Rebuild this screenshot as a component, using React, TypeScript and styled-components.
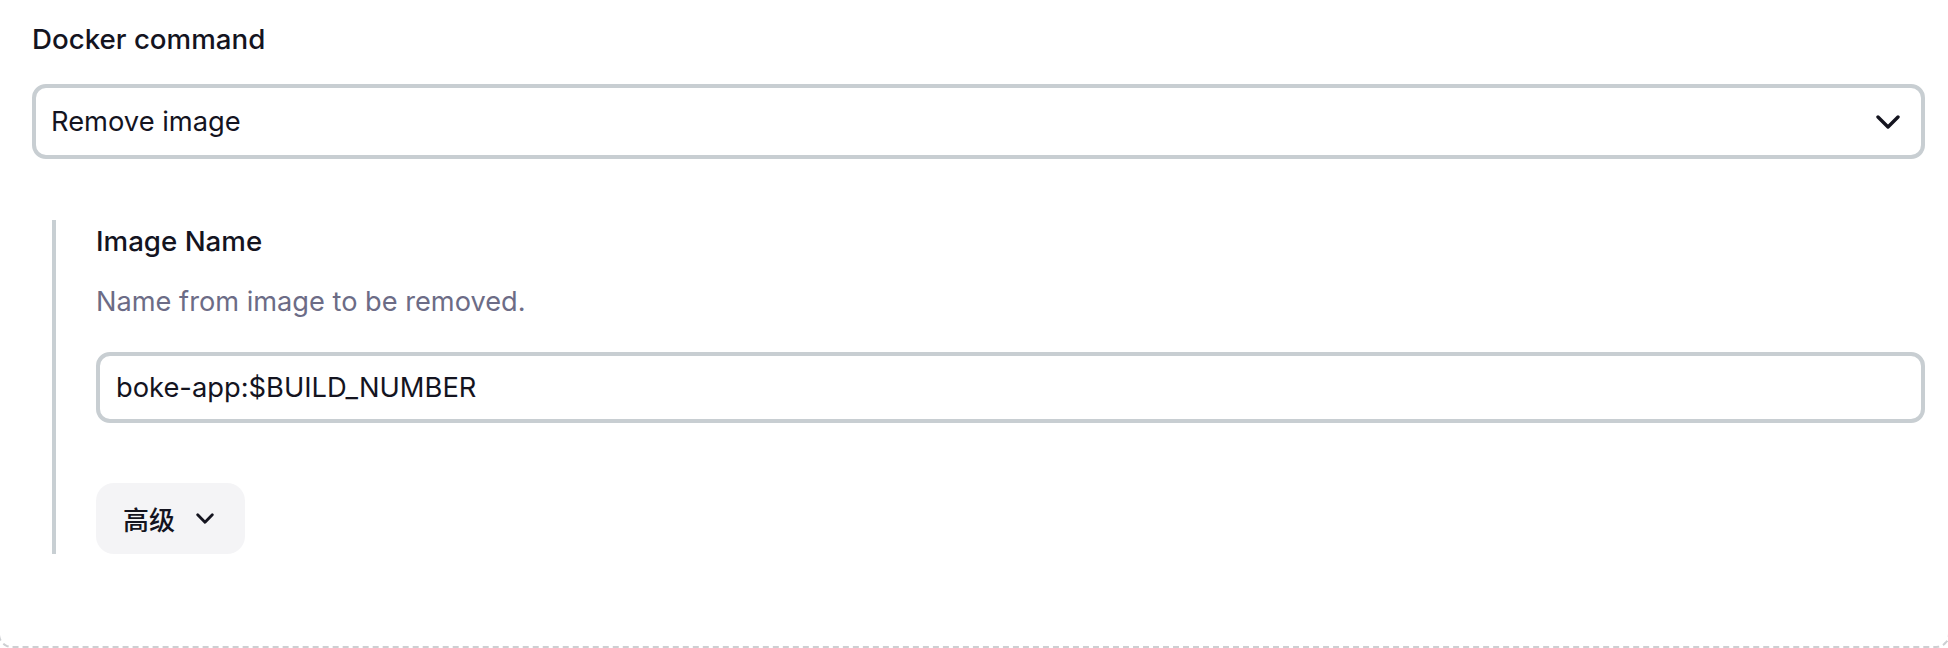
import React, { FC } from 'react'
import styled, { createGlobalStyle } from 'styled-components'

const GlobalStyle = createGlobalStyle`
  html, body {
    margin: 0;
    padding: 0;
    background: #fff;
    overflow: hidden;
  }
  body {
    font-family: Inter, "Noto Sans CJK SC", sans-serif;
    color: #14141f;
  }
`

const Chevron: FC<{ w: number; h: number; stroke: number }> = ({ w, h, stroke }) => {
  const p = stroke / 2 + 0.3
  return (
    <svg width={w} height={h} viewBox={`0 0 ${w} ${h}`} fill="none">
      <path
        d={`M${p} ${p} L${w / 2} ${h - p} L${w - p} ${p}`}
        stroke="#14141f"
        strokeWidth={stroke}
        strokeLinecap="round"
        strokeLinejoin="round"
      />
    </svg>
  )
}

const App: FC = () => {
  return (
    <>
      <GlobalStyle />
      <Panel>
        <Label>Docker command</Label>
        <Select>
          <span>Remove image</span>
          <Chevron w={24} h={14} stroke={3.4} />
        </Select>

        <Nested>
          <Label>Image Name</Label>
          <Description>Name from image to be removed.</Description>
          <TextInput>boke-app:$BUILD_NUMBER</TextInput>
          <AdvancedButton>
            <span>高级</span>
            <Chevron w={18} h={11} stroke={2.8} />
          </AdvancedButton>
        </Nested>
      </Panel>
    </>
  )
}

export default App

const Panel = styled.div`
  box-sizing: border-box;
  min-height: 648px;
  margin: 0 -2px;
  padding: 18px 23px 0 32px;
  border: 2px dashed #cdcfd2;
  border-top: none;
  border-radius: 0 0 14px 14px;
`

const Label = styled.div`
  font-size: 27.7px;
  line-height: 42px;
  font-weight: 500;
  color: #14141f;
`

const Field = styled.div`
  box-sizing: border-box;
  display: flex;
  align-items: center;
  border: 4px solid #c8ced2;
  border-radius: 14px;
  background: #fff;
  font-size: 27.3px;
  color: #14141f;
`

const Select = styled(Field)`
  margin-top: 24px;
  height: 75px;
  padding: 0 21px 0 15px;
  justify-content: space-between;
`

const Nested = styled.div`
  margin-top: 61px;
  margin-left: 20px;
  padding-left: 40px;
  border-left: 4px solid #c8cfd3;
`

const Description = styled.div`
  margin-top: 19px;
  font-size: 27.2px;
  line-height: 42px;
  color: #6c6c86;
`

const TextInput = styled(Field)`
  margin-top: 29px;
  height: 71px;
  padding: 0 16px;
`

const AdvancedButton = styled.button`
  box-sizing: border-box;
  margin-top: 60px;
  height: 71px;
  display: flex;
  align-items: center;
  gap: 21px;
  padding: 0 31px 0 27px;
  border: none;
  border-radius: 18px;
  background: #f4f4f6;
  font-family: Inter, "Noto Sans CJK SC", sans-serif;
  font-size: 26px;
  font-weight: 500;
  color: #14141f;
  cursor: pointer;
`
